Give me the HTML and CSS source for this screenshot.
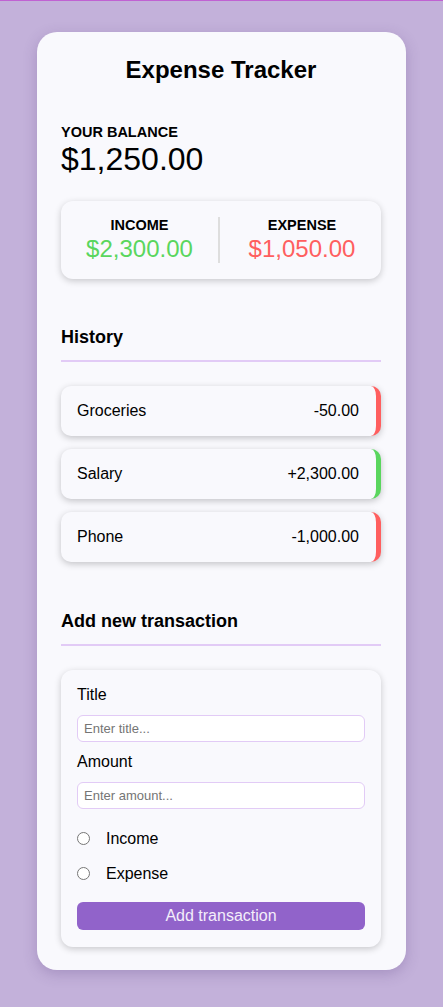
FILE: index.html
```html
<!DOCTYPE html>
<html>
<head>
<meta charset="utf-8">
<link rel="stylesheet" href="styles.css">
</head>
<body>
<div class="app">
  <h2 class="title">Expense Tracker</h2>

  <div class="balance">
    <h4 class="balance-label">YOUR BALANCE</h4>
    <div class="balance-value">$1,250.00</div>
  </div>

  <div class="inc-exp">
    <div class="col col-inc">
      <h4 class="col-label">INCOME</h4>
      <div class="money plus">$2,300.00</div>
    </div>
    <div class="col col-exp">
      <h4 class="col-label">EXPENSE</h4>
      <div class="money minus">$1,050.00</div>
    </div>
  </div>

  <h3 class="section">History</h3>
  <ul class="list">
    <li class="item neg"><span>Groceries</span><span>-50.00</span></li>
    <li class="item pos"><span>Salary</span><span>+2,300.00</span></li>
    <li class="item neg"><span>Phone</span><span>-1,000.00</span></li>
  </ul>

  <h3 class="section section-add">Add new transaction</h3>
  <form class="form">
    <label class="lbl" for="t">Title</label>
    <input class="inp" id="t" type="text" placeholder="Enter title...">
    <label class="lbl" for="a">Amount</label>
    <input class="inp" id="a" type="text" placeholder="Enter amount...">
    <label class="radio first"><input type="radio" name="type"><span>Income</span></label>
    <label class="radio"><input type="radio" name="type"><span>Expense</span></label>
    <button class="btn" type="button">Add transaction</button>
  </form>
</div>
</body>
</html>
```

FILE: styles.css
```css
* { box-sizing: border-box; }
html, body { margin: 0; padding: 0; }
body {
  background: #c3b1da;
  border-top: 1px solid #c062d2;
  font-family: "Liberation Sans", Arial, sans-serif;
  color: #000;
  padding: 31px 0 37px;
}
.app {
  width: 369px;
  margin: 0 auto;
  background: #f9f9fd;
  border-radius: 20px;
  box-shadow: 0 4px 14px rgba(80, 50, 120, 0.25);
  padding: 24px 25px 23px 24px;
  display: flex;
  flex-direction: column;
}
.title {
  margin: 0;
  text-align: center;
  font-size: 24px;
  line-height: 28px;
  font-weight: bold;
}
.balance { margin-top: 40px; }
.balance-label {
  margin: 0;
  font-size: 14.5px;
  line-height: 17px;
  font-weight: bold;
}
.balance-value {
  font-size: 32px;
  line-height: 37px;
}
.inc-exp {
  margin-top: 23px;
  background: #f9f9fd;
  border-radius: 12px;
  box-shadow: 0 2px 7px rgba(0, 0, 0, 0.2);
  padding: 16px 0;
  display: flex;
}
.col {
  text-align: center;
}
.col-inc {
  flex: 0 0 159px;
  border-right: 2px solid #dedede;
}
.col-exp {
  flex: 1;
  padding-left: 3px;
}
.col-label {
  margin: 0;
  font-size: 14.5px;
  line-height: 17px;
  font-weight: bold;
}
.money {
  font-size: 24px;
  line-height: 29px;
}
.money.plus { color: #5ad65e; }
.money.minus { color: #ff5f5f; }
.section {
  margin: 48px 0 0;
  font-size: 18px;
  line-height: 21px;
  font-weight: bold;
  padding-bottom: 12px;
  border-bottom: 2px solid #e2cbf6;
}
.list {
  list-style: none;
  margin: 24px 0 0;
  padding: 0;
  display: flex;
  flex-direction: column;
  gap: 13px;
}
.item {
  height: 50px;
  background: #f9f9fd;
  border-radius: 10px;
  box-shadow: 0 2px 7px rgba(0, 0, 0, 0.22);
  padding: 0 17px 0 16px;
  display: flex;
  justify-content: space-between;
  align-items: center;
  font-size: 16px;
}
.item.neg { border-right: 5px solid #ff5f5f; }
.item.pos { border-right: 5px solid #5ad65e; }
.section-add { margin-top: 49px; }
.form {
  margin-top: 24px;
  background: #f9f9fd;
  border-radius: 12px;
  box-shadow: 0 2px 7px rgba(0, 0, 0, 0.2);
  padding: 15px 16px 17px;
  display: flex;
  flex-direction: column;
}
.lbl {
  font-size: 16px;
  line-height: 19px;
}
.inp {
  margin: 11px 0 10px;
  height: 27px;
  border: 1px solid #e2cbf6;
  border-radius: 6px;
  background: #fff;
  padding: 0 6px;
  font-family: "Liberation Sans", Arial, sans-serif;
  font-size: 13px;
  outline: none;
}
.inp::placeholder { color: #757575; }
.radio {
  display: flex;
  align-items: center;
  font-size: 16px;
  height: 35px;
}
.radio.first { margin-top: 2px; }
.radio input {
  margin: 0 16px 0 0;
  width: 13px;
  height: 13px;
}
.btn {
  margin-top: 11px;
  height: 28px;
  border: none;
  border-radius: 6px;
  background: #9163ca;
  color: #f4eefa;
  font-family: "Liberation Sans", Arial, sans-serif;
  font-size: 16px;
}
```
